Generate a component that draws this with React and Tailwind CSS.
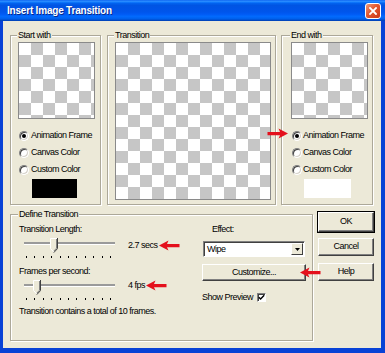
import React from 'react';

// Insert Image Transition dialog (XP style)

function Checker({ className }) {
  return (
    <div
      className={`border border-[#8a8a8a] bg-white bg-[conic-gradient(#c6c6c6_25%,#fff_0_50%,#c6c6c6_0_75%,#fff_0)] bg-[length:24px_24px] ${className}`}
    />
  );
}

function Radio({ checked }) {
  return (
    <span className="w-[10px] h-[10px] shrink-0 rounded-full bg-white border border-t-[#808080] border-l-[#808080] border-b-white border-r-white shadow-[inset_1px_1px_0_#404040,inset_-1px_-1px_0_#d4d0c8] flex items-center justify-center">
      {checked && <span className="w-[4px] h-[4px] rounded-full bg-black" />}
    </span>
  );
}

function RadioRow({ label, checked, gap }) {
  return (
    <div className={`h-[17px] flex items-center ml-[1px] ${gap}`}>
      <Radio checked={checked} />
      <span className="leading-[11px]">{label}</span>
    </div>
  );
}

function Group({ title, className, children }) {
  return (
    <fieldset
      className={`border border-[#aca899] shadow-[inset_1px_1px_0_#fff,1px_1px_0_#fff] ${className}`}
    >
      <legend className="px-[1px] -ml-[1px] leading-[11px] bg-[#ece9d8]">{title}</legend>
      {children}
    </fieldset>
  );
}

function Arrow({ className = '' }) {
  // red arrow pointing left
  return (
    <svg width="21" height="11" viewBox="0 0 21 11" className={className}>
      <path d="M0 5.5 L9.5 0.5 L8 4 H20.5 V7.3 H8 L9.5 10.5 Z" fill="#e4101c" />
    </svg>
  );
}

function Thumb() {
  return (
    <svg width="8" height="15" viewBox="0 0 8 15">
      <path d="M0 0 H7.5 V10.5 L3.75 14.5 L0 10.5 Z" fill="#ece9d8" />
      <path d="M0.5 10.5 V0.5 H7" stroke="#fff" fill="none" />
      <path d="M7.5 0 V10.6 L3.8 14.6" stroke="#404040" fill="none" />
      <path d="M6.5 1 V10.2 L3.8 13.2" stroke="#808080" fill="none" />
      <path d="M0.5 10.5 L3.6 13.8" stroke="#fff" fill="none" />
    </svg>
  );
}

function Slider({ thumbLeft }) {
  const ticks = Array.from({ length: 11 });
  return (
    <div className="relative w-[96px] h-[23px] ml-[3px] shrink-0">
      <div className="absolute left-[2px] right-[3px] top-[5px] h-[3px] bg-[#9a9a9a] border-b border-white" />
      <div className="absolute top-[1px]" style={{ left: thumbLeft }}>
        <Thumb />
      </div>
      <div className="absolute left-[4px] w-[85px] top-[19px] flex justify-between">
        {ticks.map((_, i) => (
          <span key={i} className="w-[1px] h-[2px] bg-black" />
        ))}
      </div>
    </div>
  );
}

function Button({ children, primary, className = '' }) {
  return (
    <div
      className={`w-[56px] flex items-center justify-center bg-[#ece9d8] border border-t-white border-l-white border-b-[#404040] border-r-[#404040] ${
        primary
          ? 'shadow-[0_0_0_1px_#000,inset_-1px_-1px_0_#808080]'
          : 'shadow-[inset_-1px_-1px_0_#808080]'
      } ${className}`}
    >
      {children}
    </div>
  );
}

export default function App() {
  return (
    <div className="w-[385px] h-[353px] overflow-hidden flex flex-col font-['Liberation_Sans',Arial,sans-serif] text-[9px] tracking-[-0.5px] text-black">
      {/* Title bar */}
      <div className="h-[21px] shrink-0 flex items-center justify-between pl-[7px] pr-[4px] bg-[linear-gradient(180deg,#0058ee_0%,#3593ff_5%,#127dff_10%,#0262ee_16%,#0054e3_26%,#0055eb_56%,#005bf5_68%,#026afe_78%,#0062ef_88%,#0052d6_94%,#003dae_100%)]">
        <span className="text-white font-bold text-[10px] tracking-[-0.2px] [text-shadow:1px_1px_0_#0a2a8a]">
          Insert Image Transition
        </span>
        <div className="w-[16px] h-[16px] rounded-[3px] border border-white bg-[linear-gradient(135deg,#f09a7c_0%,#e2572e_45%,#c8381a_100%)] flex items-center justify-center">
          <svg width="8" height="8" viewBox="0 0 8 8">
            <path d="M1 1 L7 7 M7 1 L1 7" stroke="#fff" strokeWidth="1.8" strokeLinecap="square" />
          </svg>
        </div>
      </div>

      {/* Body */}
      <div className="relative flex-1 bg-[#ece9d8] border-l-[3px] border-r-[4px] border-b-[5px] border-[#0842d6] pt-[9px] pl-[7px]">
        {/* Top row */}
        <div className="flex items-start">
          <Group title="Start with" className="w-[91px] h-[175px] pl-[7px]">
            <Checker className="w-[77px] h-[77px] mt-[1px]" />
            <div className="mt-[8px]">
              <RadioRow label="Animation Frame" checked gap="gap-[2px]" />
              <RadioRow label="Canvas Color" gap="gap-[2px]" />
              <RadioRow label="Custom Color" gap="gap-[2px]" />
            </div>
            <div className="ml-[14px] mt-[1px] w-[45px] h-[19px] bg-black" />
          </Group>

          <Group title="Transition" className="ml-[6px] w-[169px] h-[175px] pl-[7px]">
            <Checker className="w-[156px] h-[158px] mt-[1px]" />
          </Group>

          <Group title="End with" className="ml-[5px] w-[92px] h-[175px] pl-[9px]">
            <Checker className="w-[77px] h-[77px] mt-[1px]" />
            <div className="mt-[8px]">
              <RadioRow label="Animation Frame" checked gap="gap-[1px]" />
              <RadioRow label="Canvas Color" gap="gap-[1px]" />
              <RadioRow label="Custom Color" gap="gap-[1px]" />
            </div>
            <div className="ml-[13px] mt-[1px] w-[47px] h-[19px] bg-white" />
          </Group>
        </div>

        {/* Bottom row */}
        <div className="flex items-start mt-[4px]">
          <Group title="Define Transition" className="w-[303px] h-[132px] pl-[8px]">
            <div className="flex">
              <div className="w-[183px] shrink-0">
                <div className="mt-[4px] leading-[11px]">Transition Length:</div>
                <div className="mt-[2px] flex items-start">
                  <Slider thumbLeft={28} />
                  <div className="ml-[10px] mt-[3px] flex items-center">
                    <span className="leading-[11px]">2.7 secs</span>
                    <Arrow className="ml-[1px]" />
                  </div>
                </div>
                <div className="mt-[6px] leading-[11px]">Frames per second:</div>
                <div className="mt-[2px] flex items-start">
                  <Slider thumbLeft={11} />
                  <div className="ml-[10px] mt-[1px] flex items-center">
                    <span className="leading-[11px]">4 fps</span>
                    <Arrow className="ml-[1px]" />
                  </div>
                </div>
                <div className="mt-[4px] leading-[11px]">Transition contains a total of 10 frames.</div>
              </div>

              <div className="flex flex-col">
                <div className="ml-[10px] mt-[4px] leading-[11px]">Effect:</div>
                <div className="ml-[1px] mt-[6px] w-[102px] h-[16px] bg-white border border-t-[#808080] border-l-[#808080] border-b-white border-r-white shadow-[inset_1px_1px_0_#404040] flex items-center justify-between pl-[3px] pr-[1px]">
                  <span className="leading-[11px]">Wipe</span>
                  <div className="w-[12px] h-[12px] bg-[#ece9d8] border border-t-white border-l-white border-b-[#404040] border-r-[#404040] flex items-center justify-center">
                    <svg width="5" height="3" viewBox="0 0 5 3">
                      <path d="M0 0 H5 L2.5 3 Z" fill="#000" />
                    </svg>
                  </div>
                </div>
                <Button className="mt-[7px] !w-[104px] h-[17px]">Customize...</Button>
                <div className="mt-[11px] flex items-center">
                  <span className="leading-[11px]">Show Preview</span>
                  <span className="ml-[4px] w-[9px] h-[9px] bg-white border border-t-[#808080] border-l-[#808080] border-b-white border-r-white shadow-[inset_1px_1px_0_#404040] flex items-center justify-center">
                    <svg width="7" height="7" viewBox="0 0 7 7">
                      <path d="M0.8 3.2 L2.6 5 L6.2 1.2" stroke="#000" strokeWidth="1.4" fill="none" />
                    </svg>
                  </span>
                </div>
              </div>
            </div>
          </Group>

          <div className="ml-[5px] mt-[3px] flex flex-col">
            <Button primary className="h-[20px]">OK</Button>
            <Button className="mt-[6px] h-[18px]">Cancel</Button>
            <Button className="mt-[7px] h-[18px]">Help</Button>
          </div>
        </div>

        {/* Annotation arrows over the dialog */}
        <Arrow className="absolute left-[264px] top-[107px] -scale-x-100" />
        <Arrow className="absolute left-[297px] top-[246px]" />
      </div>
    </div>
  );
}
